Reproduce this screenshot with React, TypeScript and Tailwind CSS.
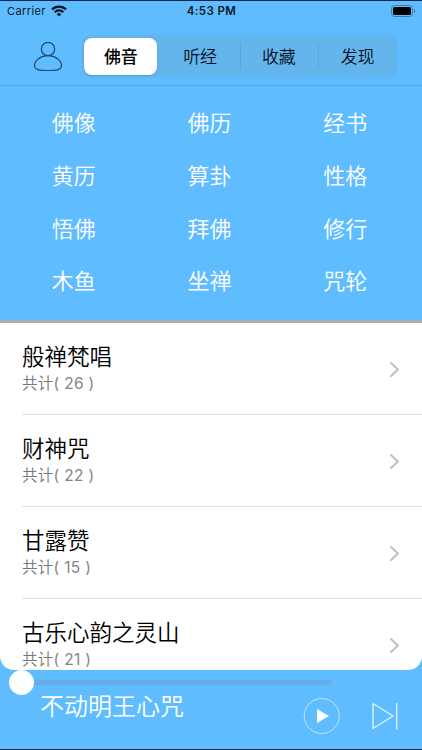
import { useState } from "react";

const tabs = ["佛音", "听经", "收藏", "发现"];

const shortcuts = [
  "佛像", "佛历", "经书",
  "黄历", "算卦", "性格",
  "悟佛", "拜佛", "修行",
  "木鱼", "坐禅", "咒轮",
];

const albums = [
  { title: "般禅梵唱", count: 26 },
  { title: "财神咒", count: 22 },
  { title: "甘露赞", count: 15 },
  { title: "古乐心韵之灵山", count: 21 },
];

function StatusBar() {
  return (
    <div className="grid h-[21px] shrink-0 grid-cols-3 items-center border-t border-[#10264d] pr-[6px] pl-[7px] text-[11px] text-[#0a1a2a]">
      <div className="flex items-center gap-[5px]">
        <span className="tracking-[0.4px]">Carrier</span>
        <svg width="16" height="12" viewBox="0 0 16 12" fill="none" stroke="#06121d" strokeWidth="2.2">
          <path d="M1 4.4a10 10 0 0 1 14 0" />
          <path d="M3.7 7.2a6.1 6.1 0 0 1 8.6 0" />
          <path d="M8 11.6 5.7 9.2a3.3 3.3 0 0 1 4.6 0Z" fill="#06121d" stroke="none" />
        </svg>
      </div>
      <span className="pt-px text-center text-[11.5px] font-semibold tracking-[0.4px]">4:53 PM</span>
      <svg className="justify-self-end" width="26" height="12" viewBox="0 0 26 12">
        <rect x="1.5" y="0.5" width="21" height="11" rx="3" fill="none" stroke="#3f7ba8" />
        <rect x="3" y="2" width="18" height="8" rx="1.6" fill="#000" />
        <path d="M24 4v4c1.4-.6 1.4-3.4 0-4Z" fill="#2f6287" />
      </svg>
    </div>
  );
}

function Header() {
  const [active, setActive] = useState(0);

  return (
    <header className="flex h-[65px] shrink-0 items-start border-b border-[#55a7e0] pt-[14px] pl-[33px]">
      <svg className="mt-[6px] mr-[19px] shrink-0" width="30" height="31" viewBox="0 0 30 31" fill="none" stroke="#1d4a70" strokeWidth="1.2">
        <circle cx="15" cy="8" r="6.7" />
        <path d="M15 14.7C7.5 14.7 1.5 19.8 1.5 24.5c0 4.2 4.5 5 13.5 5s13.5-.8 13.5-5c0-4.7-6-9.8-13.5-9.8Z" />
      </svg>
      <div className="flex h-[42px] w-[315px] rounded-[9px] bg-[#64b5ec]">
        {tabs.map((tab, i) => (
          <button
            key={tab}
            onClick={() => setActive(i)}
            className={`relative flex w-1/4 items-center justify-center pt-[3px] text-[17px] ${
              active === i ? "pr-px font-medium text-black" : "font-[350] text-[#06121d]"
            }`}
          >
            {active === i && (
              <span className="absolute top-[3px] right-[4px] bottom-[2px] left-[2px] rounded-[8px] bg-white shadow-sm" />
            )}
            <span className="relative">{tab}</span>
            {i > 1 && <span className="absolute top-[8px] bottom-[8px] left-0 w-px bg-[#5ba6dc]" />}
          </button>
        ))}
      </div>
    </header>
  );
}

function AlbumRow({ title, count }: { title: string; count: number }) {
  return (
    <li className="ml-[22px] flex h-[92px] shrink-0 items-center justify-between border-b border-[#e2e2e2] pr-[22px]">
      <div>
        <h3 className="text-[22.5px] leading-[28px] font-[350] text-black">{title}</h3>
        <p className="pt-px text-[15.5px] leading-[23px] font-[350] tracking-[0.3px] text-[#777]">
          共计<span className="font-normal tracking-[0.3px] text-[#848484]">( {count} )</span>
        </p>
      </div>
      <svg className="mt-px" width="11" height="17" viewBox="0 0 11 17" fill="none" stroke="#c1c1c3" strokeWidth="2.1" strokeLinecap="round" strokeLinejoin="round">
        <path d="m2 2 7 6.5L2 15" />
      </svg>
    </li>
  );
}

function Player() {
  return (
    <footer className="h-[80px] shrink-0 border-b border-[#10264d]">
      <div className="flex h-[24px] items-center pl-[9px]">
        <span className="z-10 size-[25px] shrink-0 rounded-full bg-white" />
        <span className="-ml-[4px] h-[5px] w-[302px] rounded-full bg-[#66aee6]" />
      </div>
      <div className="flex items-start pl-[40px]">
        <p className="w-[263px] pt-px text-[24px] leading-[24px] font-[350] text-white">不动明王心咒</p>
        <svg className="mt-[3px]" width="38" height="38" viewBox="0 0 38 38">
          <circle cx="18.7" cy="19" r="17.5" fill="none" stroke="#c0e4ff" />
          <path d="M14 12v14l12-7Z" fill="#fff" />
        </svg>
        <svg className="mt-[7px] ml-[30px]" width="28" height="30" viewBox="0 0 28 30" fill="none" stroke="#e5f4ff" strokeWidth="1.3" strokeLinejoin="round" strokeLinecap="round">
          <path d="M2 2.5v25L22 15Z" />
          <path d="M25.7 2.5V28" />
        </svg>
      </div>
    </footer>
  );
}

export default function App() {
  return (
    <div className="flex h-[750px] w-[422px] flex-col overflow-hidden bg-[#5fbdff] font-[Inter,'Noto_Sans_CJK_SC',sans-serif]">
      <StatusBar />
      <Header />
      <nav className="grid h-[234px] shrink-0 grid-cols-3 content-start pt-[11px] pr-[9px] pl-[6px]">
        {shortcuts.map((name) => (
          <a key={name} className="flex h-[52.7px] items-center justify-center pt-px text-[22px] font-[350] text-white">
            {name}
          </a>
        ))}
      </nav>
      <main className="h-[350px] shrink-0 overflow-hidden rounded-b-[14px] border-t-[3px] border-[#a9abad] bg-white">
        <ul className="flex flex-col">
          {albums.map((album) => (
            <AlbumRow key={album.title} {...album} />
          ))}
        </ul>
      </main>
      <Player />
    </div>
  );
}
